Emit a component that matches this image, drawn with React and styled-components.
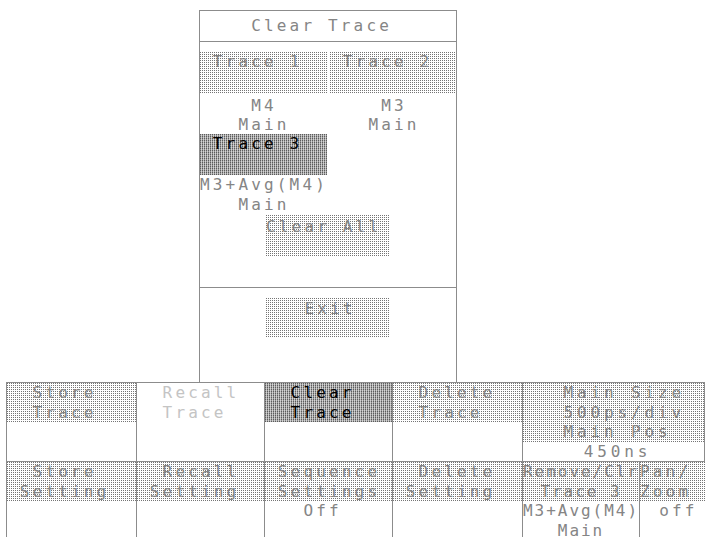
import React from 'react';
import styled, { createGlobalStyle, css } from 'styled-components';

const GLYPH = 9.63; // advance of 16px DejaVu Sans Mono

const Global = createGlobalStyle`
  html, body { margin: 0; padding: 0; background: #fff; }
  body {
    width: 705px; height: 537px; overflow: hidden;
    font-family: "DejaVu Sans Mono", "Liberation Mono", monospace;
    font-size: 16px;
  }
`;

const shades = {
  none: css``,
  light: css`
    background-color: #fff;
    background-image:
      repeating-linear-gradient(180deg, transparent 0 1px, #fff 1px 2px),
      repeating-linear-gradient(90deg, #747474 0 1px, #fff 1px 2px);
  `,
  dark: css`
    background-color: #fff;
    background-image:
      repeating-linear-gradient(180deg, transparent 0 1px, rgba(255,255,255,0.35) 1px 2px),
      repeating-linear-gradient(90deg, #5c5c5c 0 1px, #bdbdbd 1px 2px);
  `,
};

const tones = { gray: '#858585', faint: '#c4c4c4', ink: '#000' };

const RULE = '1px solid #8c8c8c';

const Screen = styled.div`
  width: 705px;
  height: 537px;
  padding-top: 10px;
  box-sizing: border-box;
  overflow: hidden;
  display: flex;
  flex-direction: column;
`;

const Panel = styled.section`
  margin-left: 199px;
  width: 258px;
  height: 372px;
  box-sizing: border-box;
  border: ${RULE};
  border-bottom: none;
  display: flex;
  flex-direction: column;
  flex: none;
`;

const Title = styled.header`
  height: 31px;
  box-sizing: border-box;
  border-bottom: ${RULE};
  display: flex;
  align-items: center;
`;

const Body = styled.div`
  height: 246px;
  box-sizing: border-box;
  border-bottom: ${RULE};
  padding-top: 10px;
  display: flex;
  flex-direction: column;
`;

const Footer = styled.div`
  flex: 1;
  padding-top: 10px;
  display: flex;
  flex-direction: column;
  align-items: center;
`;

const TraceRow = styled.div`
  display: flex;
  gap: 3px;
  align-items: flex-start;
`;

const Column = styled.div`
  width: ${p => p.$w}px;
  display: flex;
  flex-direction: column;
`;

const Box = styled.div`
  height: ${p => p.$h}px;
  box-sizing: border-box;
  padding-top: ${p => p.$pad || 0}px;
  ${p => shades[p.$shade || 'light']}
`;

const CenterBox = styled(Box)`
  width: 124px;
  align-self: center;
`;

const Values = styled.div`
  margin-top: ${p => p.$gap || 0}px;
  display: flex;
  flex-direction: column;
`;

const Line = styled.div`
  height: ${p => p.$lh || 19.5}px;
  line-height: ${p => p.$lh || 19.5}px;
  white-space: pre;
  letter-spacing: calc(var(--adv, 12.8px) - ${GLYPH}px);
  padding-left: calc(var(--adv, 12.8px) * ${p => p.$indent || 0});
  color: ${p => tones[p.$tone || 'gray']};
  overflow: visible;
`;

const Menu = styled.nav`
  margin-left: 6px;
  border-top: ${RULE};
  border-left: ${RULE};
  display: grid;
  grid-template-columns: 130px 128px 128px 130px 1fr;
  grid-template-rows: 79px 79px;
  flex: none;
`;

const Cell = styled.div`
  box-sizing: border-box;
  border-right: ${RULE};
  border-bottom: ${RULE};
  display: flex;
  flex-direction: column;
  --adv: ${p => p.$adv || 12.8}px;
  overflow: hidden;
`;

const Head = styled.div`
  display: flex;
  flex-direction: column;
  ${p => shades[p.$shade || 'light']}
`;

const Split = styled.div`
  display: grid;
  grid-template-columns: 117px 1fr;
  overflow: hidden;
`;

const SubCell = styled(Cell)`
  border-bottom: none;
  border-right: ${p => (p.$last ? 'none' : RULE)};
`;

const ind = (t, cells = 10) => Math.max(0, Math.floor((cells - t.length) / 2));

const topRow = [
  { head: ['Store', 'Trace'], shade: 'light', tone: 'gray' },
  { head: ['Recall', 'Trace'], shade: 'none', tone: 'faint' },
  { head: ['Clear', 'Trace'], shade: 'dark', tone: 'ink' },
  { head: ['Delete', 'Trace'], shade: 'light', tone: 'gray' },
];

const bottomRow = [
  { head: ['Store', 'Setting'] },
  { head: ['Recall', 'Setting'] },
  { head: ['Sequence', 'Settings'], values: ['Off'] },
  { head: ['Delete', 'Setting'] },
];

function MenuCell({ head, values = [], shade = 'light', tone = 'gray' }) {
  return (
    <Cell>
      <Head $shade={shade}>
        {head.map(t => (
          <Line key={t} $indent={ind(t)} $tone={tone}>{t}</Line>
        ))}
      </Head>
      {values.map(t => (
        <Line key={t} $indent={ind(t)}>{t}</Line>
      ))}
    </Cell>
  );
}

export default function App() {
  return (
    <>
      <Global />
      <Screen>
        <Panel>
          <Title>
            <Line $lh={30} $indent={4}>Clear Trace</Line>
          </Title>
          <Body>
            <TraceRow>
              <Column $w={127}>
                <Box $h={42}>
                  <Line $lh={20} $indent={1}>Trace 1</Line>
                </Box>
                <Values $gap={2}>
                  <Line $lh={19} $indent={4}>M4</Line>
                  <Line $lh={19} $indent={3}>Main</Line>
                </Values>
                <Box $h={41} $shade="dark">
                  <Line $lh={20} $indent={1} $tone="ink">Trace 3</Line>
                </Box>
                <Values>
                  <Line $lh={20}>M3+Avg(M4)</Line>
                  <Line $lh={20} $indent={3}>Main</Line>
                </Values>
              </Column>
              <Column $w={126}>
                <Box $h={42}>
                  <Line $lh={20} $indent={1}>Trace 2</Line>
                </Box>
                <Values $gap={2}>
                  <Line $lh={19} $indent={4}>M3</Line>
                  <Line $lh={19} $indent={3}>Main</Line>
                </Values>
              </Column>
            </TraceRow>
            <CenterBox $h={42} $pad={2}>
              <Line $lh={20}>Clear All</Line>
            </CenterBox>
          </Body>
          <Footer>
            <CenterBox $h={40} $pad={1}>
              <Line $lh={20} $indent={3}>Exit</Line>
            </CenterBox>
          </Footer>
        </Panel>

        <Menu>
          {topRow.map(c => (
            <MenuCell key={c.head.join()} {...c} />
          ))}
          <Cell $adv={13.5}>
            <Head>
              <Line $indent={3}>Main Size</Line>
              <Line $indent={3}>500ps/div</Line>
              <Line $indent={3}>Main Pos</Line>
            </Head>
            <Line $indent={4.5}>450ns</Line>
          </Cell>

          {bottomRow.map(c => (
            <MenuCell key={c.head.join()} {...c} />
          ))}
          <Split>
            <SubCell $adv={11.6}>
              <Head>
                <Line>Remove/Clr</Line>
                <Line $indent={1.5}>Trace 3</Line>
              </Head>
              <Line>M3+Avg(M4)</Line>
              <Line $indent={3}>Main</Line>
            </SubCell>
            <SubCell $last $adv={12.8}>
              <Head>
                <Line>Pan/</Line>
                <Line>Zoom</Line>
              </Head>
              <Line $indent={1.5}>off</Line>
            </SubCell>
          </Split>
        </Menu>
      </Screen>
    </>
  );
}
